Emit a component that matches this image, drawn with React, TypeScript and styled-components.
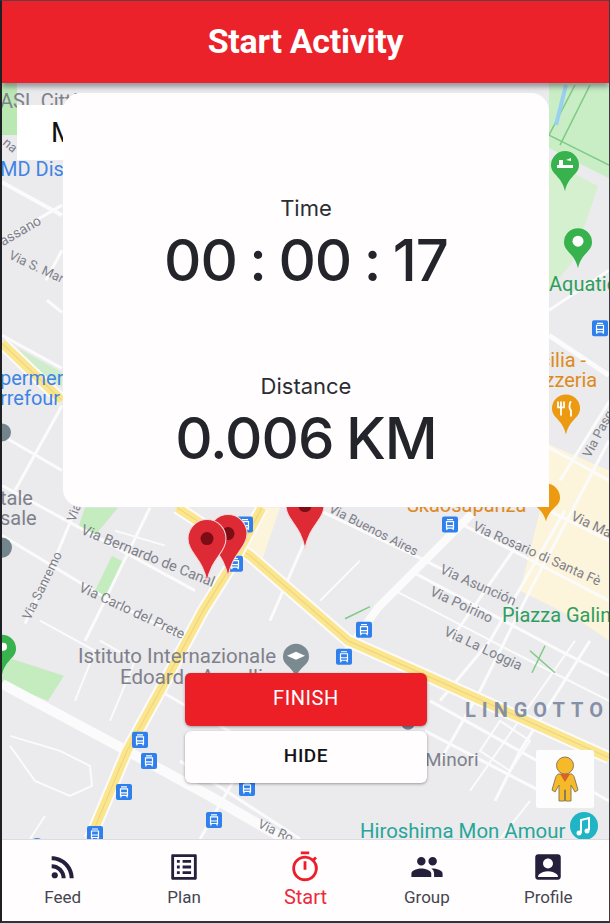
import React from 'react'
import styled, { createGlobalStyle } from 'styled-components'
import { MdRssFeed, MdListAlt, MdOutlineTimer, MdPeople, MdAccountBox } from 'react-icons/md'

const Global = createGlobalStyle`
  html, body { margin: 0; padding: 0; background: #fff; }
  * { box-sizing: border-box; }
`

const Screen = styled.div`
  width: 610px;
  height: 923px;
  display: flex;
  flex-direction: column;
  overflow: hidden;
  border-top: 1px solid #6b3a48;
  border-left: 2px solid #1f2024;
  border-right: 1px solid #3a3b40;
  border-bottom: 2px solid #2b3540;
  font-family: Roboto, 'Liberation Sans', sans-serif;
`

const Header = styled.header`
  height: 82px;
  flex: none;
  display: flex;
  align-items: center;
  justify-content: center;
  padding-bottom: 2px;
  background: #ec222b;
  box-shadow: 0 4px 5px rgba(70, 70, 85, 0.5);
  position: relative;
  z-index: 2;
`

const Title = styled.h1`
  margin: 0;
  color: #fff;
  font-size: 34px;
  font-weight: 700;
  letter-spacing: -0.3px;
`

const MapArea = styled.main`
  flex: 1;
  position: relative;
  overflow: hidden;
  background: #ebeaec;
`

const MapCanvas = styled.svg`
  display: block;
  width: 100%;
  height: 100%;
`

const Label = styled.text<{ $color?: string; $size?: number; $weight?: number }>`
  fill: ${p => p.$color || '#7e818b'};
  font-size: ${p => p.$size || 13}px;
  font-weight: ${p => p.$weight || 400};
  font-family: Roboto, 'Liberation Sans', sans-serif;
`

const MapTypeButton = styled.div`
  position: absolute;
  left: 15px;
  top: 22px;
  width: 60px;
  height: 55px;
  background: #fff;
  color: #111;
  font-size: 28px;
  line-height: 55px;
  padding-left: 34px;
`

const Panel = styled.section`
  position: absolute;
  left: 61px;
  top: 10px;
  width: 486px;
  height: 414px;
  background: #fffdfe;
  border-radius: 18px 18px 0 18px;
  display: flex;
  flex-direction: column;
  align-items: center;
  gap: 81px;
  padding-top: 102px;
  font-family: Inter, Roboto, sans-serif;
`

const Stat = styled.div`
  display: flex;
  flex-direction: column;
  align-items: center;
  gap: 7px;
`

const StatLabel = styled.div`
  font-size: 22px;
  line-height: 26px;
  color: #2b2d33;
`

const StatValue = styled.div`
  font-size: 58px;
  font-weight: 500;
  line-height: 64px;
  letter-spacing: -1px;
  word-spacing: -2px;
  color: #24252b;
  white-space: pre;
`

const Actions = styled.div`
  position: absolute;
  left: 183px;
  top: 590px;
  width: 242px;
  display: flex;
  flex-direction: column;
  gap: 5px;
`

const ActionButton = styled.button<{ $primary?: boolean }>`
  height: ${p => (p.$primary ? 53 : 52)}px;
  border: 0;
  border-radius: 6px;
  padding: 0 0 3px;
  background: ${p => (p.$primary ? '#ec1f27' : '#fffdfe')};
  color: ${p => (p.$primary ? '#fff' : '#141418')};
  font-family: inherit;
  font-size: ${p => (p.$primary ? 20 : 19)}px;
  font-weight: ${p => (p.$primary ? 400 : 500)};
  letter-spacing: 0.6px;
  box-shadow: 0 1px 3px rgba(0, 0, 0, 0.35);
`

const PegmanCard = styled.div`
  position: absolute;
  right: 15px;
  top: 667px;
  width: 58px;
  height: 58px;
  background: #fdfdfd;
  border-radius: 2px;
  display: flex;
  align-items: center;
  justify-content: center;
`

const BottomNav = styled.nav`
  height: 82px;
  flex: none;
  display: grid;
  grid-template-columns: repeat(5, 1fr);
  background: #fffdfe;
  border-top: 1px solid #dcdce0;
  position: relative;
  z-index: 2;
`

const NavItem = styled.div<{ $active?: boolean }>`
  display: flex;
  flex-direction: column;
  align-items: center;
  padding-top: 10px;
  color: ${p => (p.$active ? '#ee1d2a' : '#24203c')};
`

const NavLabel = styled.span<{ $active?: boolean }>`
  margin-top: 3px;
  font-size: ${p => (p.$active ? 20 : 17)}px;
  line-height: 20px;
  color: ${p => (p.$active ? '#ee2a3a' : '#45454f')};
`

const blocks = [
  { d: 'M549 83H609V178L549 148Z', c: '#c9edc5' },
  { d: 'M2 83H17V135H2Z', c: '#b9e8b2' },
  { d: 'M549 160L598 186L572 262L549 290Z', c: '#d4f0cf' },
  { d: 'M18 348L62 372V386L40 372Z', c: '#cfeccb' },
  { d: 'M85 507H118L95 535L78 528Z', c: '#c5ecbf' },
  { d: 'M112 555L125 562L105 600L94 592Z', c: '#c5ecbf' },
  { d: 'M2 655L64 675L48 700L2 682Z', c: '#c5ecbf' },
  { d: 'M540 440L609 470V640L580 620L520 590L540 510Z', c: '#fdf4dc' },
  { d: 'M255 507H280L262 560L248 548Z', c: '#fdf4dc' },
]

const whiteRoads: { d: string; w: number }[] = [
  { d: 'M2 683L127 750L213 797L305 850', w: 10 },
  { d: 'M472 513L378 607L340 660', w: 8 },
  { d: 'M2 182L62 215', w: 4 },
  { d: 'M2 240L62 205', w: 3 },
  { d: 'M62 250L46 280', w: 3 },
  { d: 'M47 300L62 312', w: 3 },
  { d: 'M2 335L62 368', w: 3 },
  { d: 'M62 405L15 490', w: 3 },
  { d: 'M2 435L62 470', w: 3 },
  { d: 'M2 485L85 530L195 590', w: 3 },
  { d: 'M75 510L50 570L25 623', w: 3 },
  { d: 'M150 507L100 610L85 640', w: 3 },
  { d: 'M2 535L110 600L190 640', w: 3 },
  { d: 'M115 530L165 545', w: 2 },
  { d: 'M40 620L95 650L75 700', w: 2 },
  { d: 'M100 640L135 660L110 720', w: 2 },
  { d: 'M10 735L60 750L90 765L92 785L70 795L35 780L10 745', w: 2 },
  { d: 'M45 815L30 838', w: 2 },
  { d: 'M180 760L300 838', w: 3 },
  { d: 'M245 760L200 838', w: 3 },
  { d: 'M160 690L280 760', w: 3 },
  { d: 'M300 507L305 540L270 620', w: 3 },
  { d: 'M320 510L415 555L455 575', w: 3 },
  { d: 'M360 560L320 600', w: 2 },
  { d: 'M455 520L609 600', w: 3 },
  { d: 'M410 570L560 650L609 675', w: 3 },
  { d: 'M395 590L520 655L609 700', w: 2 },
  { d: 'M520 540L450 640', w: 3 },
  { d: 'M565 510L490 640L440 700', w: 3 },
  { d: 'M609 440L530 590L480 690L440 760', w: 3 },
  { d: 'M549 447L609 480', w: 3 },
  { d: 'M549 510L609 540', w: 3 },
  { d: 'M590 640L520 750L495 800', w: 3 },
  { d: 'M575 640L505 740L470 790', w: 2 },
  { d: 'M430 700L609 800', w: 3 },
  { d: 'M425 730L540 790', w: 3 },
  { d: 'M500 720L530 740L510 770L480 750Z', w: 2 },
  { d: 'M549 310L609 270', w: 3 },
  { d: 'M549 335L609 375', w: 5 },
  { d: 'M610 400L560 480', w: 3 },
  { d: 'M530 800L500 838', w: 2 },
]

const yellowRoads = [
  'M2 343L62 400',
  'M177 507L250 555L348 640L438 680L609 757',
  'M262 507L230 567L203 610L160 690L127 750L90 838',
]

const greenLines = [
  'M549 135L609 165',
  'M575 85L549 135',
  'M590 85L560 145',
  'M345 618L370 606',
  'M530 650L555 672M532 672L545 645',
]

const labels: { x: number; y: number; t: string; r?: number; s?: number; c?: string; w?: number; ls?: number }[] = [
  { x: 0, y: 108, t: 'ASL Città', s: 20 },
  { x: 0, y: 176, t: 'MD Discount', s: 20, c: '#3f84e5' },
  { x: 2, y: 144, t: 'na', r: 40, s: 13 },
  { x: 3, y: 246, t: 'assano', r: -30, s: 14 },
  { x: 8, y: 258, t: 'Via S. Mar', r: 25, s: 13 },
  { x: 549, y: 291, t: 'Aquatic', s: 20, c: '#2f9e5c' },
  { x: 523, y: 367, t: 'Sicilia -', s: 20, c: '#dd8a1d' },
  { x: 527, y: 387, t: 'Pizzeria', s: 20, c: '#dd8a1d' },
  { x: 0, y: 385, t: 'permerc', s: 20, c: '#3f84e5' },
  { x: 0, y: 405, t: 'rrefour', s: 20, c: '#3f84e5' },
  { x: 0, y: 504, t: 'tale', s: 20 },
  { x: 0, y: 524, t: 'sale', s: 20 },
  { x: 80, y: 533, t: 'Via Bernardo de Canal', r: 22, s: 14.5 },
  { x: 78, y: 590, t: 'Via Carlo del Prete', r: 25, s: 14 },
  { x: 30, y: 620, t: 'Via Sanremo', r: -64, s: 13 },
  { x: 75, y: 522, t: 'Via', r: -70, s: 13 },
  { x: 407, y: 511, t: 'Skaosapanza', s: 20, c: '#dd8a1d' },
  { x: 328, y: 511, t: 'Via Buenos Aires', r: 27, s: 13 },
  { x: 472, y: 529, t: 'Via Rosario di Santa Fè', r: 24, s: 13.5 },
  { x: 570, y: 519, t: 'Via Mar', r: 25, s: 14 },
  { x: 590, y: 458, t: 'Via Pasq', r: -62, s: 13 },
  { x: 439, y: 572, t: 'Via Asunción', r: 24, s: 14 },
  { x: 429, y: 594, t: 'Via Poirino', r: 25, s: 14 },
  { x: 502, y: 621, t: 'Piazza Galin', s: 20, c: '#2f9e5c' },
  { x: 443, y: 634, t: 'Via La Loggia', r: 25, s: 14 },
  { x: 78, y: 662, t: 'Istituto Internazionale', s: 20.5 },
  { x: 120, y: 683, t: 'Edoardo Agnelli', s: 20.5 },
  { x: 465, y: 716, t: 'LINGOTTO', s: 20, w: 700, c: '#8590a6', ls: 6 },
  { x: 425, y: 765, t: 'Minori', s: 19 },
  { x: 257, y: 826, t: 'Via Ro', r: 25, s: 13 },
  { x: 360, y: 837, t: 'Hiroshima Mon Amour', s: 20.4, c: '#26a69a' },
]

const trams = [
  [600, 328], [450, 524], [364, 629], [344, 656], [140, 739], [149, 760],
  [124, 791], [214, 819], [95, 833], [245, 524], [235, 563], [247, 787],
]

// place marker with its head centred on x,y
const Marker = ({ x, y, r = 14, tail = 26, fill }: { x: number; y: number; r?: number; tail?: number; fill: string }) => (
  <path
    d={`M${x - r} ${y}a${r} ${r} 0 1 1 ${2 * r} 0c0 ${r * 0.7} ${-r * 0.75} ${tail * 0.4} ${-r} ${tail}c${-r * 0.25} ${-tail * 0.6} ${-r} ${-tail + r * 0.7} ${-r} ${-tail}z`}
    fill={fill}
  />
)

const RedPin = ({ x, y }: { x: number; y: number }) => (
  <g>
    <path
      d={`M${x - 19} ${y}a19 19 0 1 1 38 0c0 14 -15 20 -19 43c-4 -23 -19 -29 -19 -43z`}
      fill="#dd2a35"
      stroke="#f6d9da"
      strokeWidth="1"
    />
    <circle cx={x} cy={y} r="6.5" fill="#7d0d14" />
  </g>
)

const TramStop = ({ x, y }: { x: number; y: number }) => (
  <g transform={`translate(${x - 8} ${y - 8})`}>
    <rect width="16" height="16" rx="2" fill="#2f80ed" />
    <path d="M5 3h6M4.5 5h7v6.5h-7zM5 9h6M5.5 11.5l-1 2M10.5 11.5l1 2" stroke="#fff" strokeWidth="1.2" fill="none" />
  </g>
)

const Pegman = () => (
  <svg width="28" height="46" viewBox="0 0 28 46">
    <path
      d="M7 18c-1 1-2 2-2.500 4L1 34l3 2 4-7v16h5.500V34h1v11H20V29l4 7 3-2-3.500-12c-.5-2-1.500-3-2.500-4z"
      fill="#f6b92a"
      stroke="#8d7d55"
      strokeWidth="1"
    />
    <circle cx="14" cy="9.500" r="8.500" fill="#f6b92a" stroke="#8d7d55" strokeWidth="1" />
    <path d="M9 18h10l-5 8z" fill="#d9622b" />
  </svg>
)

const MapDrawing = () => (
  <MapCanvas viewBox="2 83 607 755" preserveAspectRatio="none">
    {blocks.map(b => <path key={b.d} d={b.d} fill={b.c} />)}
    {whiteRoads.map(r => <path key={r.d} d={r.d} stroke="#fbfbfc" strokeWidth={r.w} fill="none" />)}
    {yellowRoads.map(d => (
      <g key={d}>
        <path d={d} stroke="#fbfbfc" strokeWidth="13" fill="none" />
        <path d={d} stroke="#fbe68e" strokeWidth="9" fill="none" />
        <path d={d} stroke="#ecd37e" strokeWidth="1" fill="none" />
      </g>
    ))}
    {greenLines.map(d => <path key={d} d={d} stroke="#7fca86" strokeWidth="1.5" fill="none" />)}
    <path d="M566 85L556 125" stroke="#9ad0ef" strokeWidth="4" fill="none" />
    {labels.map(l => (
      <Label
        key={l.t}
        x={l.x}
        y={l.y}
        $size={l.s}
        $color={l.c}
        $weight={l.w}
        letterSpacing={l.ls}
        transform={l.r ? `rotate(${l.r} ${l.x} ${l.y})` : undefined}
      >
        {l.t}
      </Label>
    ))}
    {trams.map(([x, y]) => <TramStop key={`${x}-${y}`} x={x} y={y} />)}
    <Marker x={565} y={165} fill="#37b24d" />
    <path d="M557 165h16v3h-16zM559 160h4v5h-4zM566 160l5 -2v3z" fill="#fff" />
    <Marker x={578} y={242} fill="#37b24d" />
    <circle cx="578" cy="241" r="5.500" fill="#fff" />
    <Marker x={566} y={408} fill="#ec9a12" />
    <path d="M561 401v14M558 401v6h6v-6M571 401c-2 2-2 8 0 9v6" stroke="#fff" strokeWidth="1.800" fill="none" />
    <Marker x={546} y={497} tail={24} fill="#ec9a12" />
    <Marker x={296} y={656} r={13} tail={22} fill="#7a8a90" />
    <path d="M287 655l9 -4 9 4 -9 4z" fill="#fff" />
    <circle cx="408" cy="722" r="7" fill="#7b7a92" />
    <circle cx="2" cy="432" r="9" fill="#73858c" />
    <circle cx="2" cy="547" r="10" fill="#73858c" />
    <Marker x={2} y={648} fill="#37b24d" />
    <circle cx="3" cy="646" r="4" fill="#fff" />
    <circle cx="584" cy="825" r="14" fill="#1fb5c4" />
    <path d="M581 832v-13l8 -2v12" stroke="#fff" strokeWidth="2" fill="none" />
    <circle cx="579" cy="832" r="2.500" fill="#fff" />
    <circle cx="587" cy="830" r="2.500" fill="#fff" />
    <circle cx="37" cy="845" r="8" fill="#3f84e5" />
    <RedPin x={228} y={533} />
    <RedPin x={207} y={538} />
    <RedPin x={305} y={505} />
  </MapCanvas>
)

const navItems = [
  { label: 'Feed', Icon: MdRssFeed },
  { label: 'Plan', Icon: MdListAlt },
  { label: 'Start', Icon: MdOutlineTimer, active: true },
  { label: 'Group', Icon: MdPeople },
  { label: 'Profile', Icon: MdAccountBox },
]

const App = () => (
  <Screen>
    <Global />
    <Header>
      <Title>Start Activity</Title>
    </Header>
    <MapArea>
      <MapDrawing />
      <MapTypeButton>M</MapTypeButton>
      <Panel>
        <Stat>
          <StatLabel>Time</StatLabel>
          <StatValue>00 : 00 : 17</StatValue>
        </Stat>
        <Stat>
          <StatLabel>Distance</StatLabel>
          <StatValue>0.006 KM</StatValue>
        </Stat>
      </Panel>
      <Actions>
        <ActionButton $primary>FINISH</ActionButton>
        <ActionButton>HIDE</ActionButton>
      </Actions>
      <PegmanCard>
        <Pegman />
      </PegmanCard>
    </MapArea>
    <BottomNav>
      {navItems.map(({ label, Icon, active }) => (
        <NavItem key={label} $active={active}>
          <Icon size={34} />
          <NavLabel $active={active}>{label}</NavLabel>
        </NavItem>
      ))}
    </BottomNav>
  </Screen>
)

export default App
